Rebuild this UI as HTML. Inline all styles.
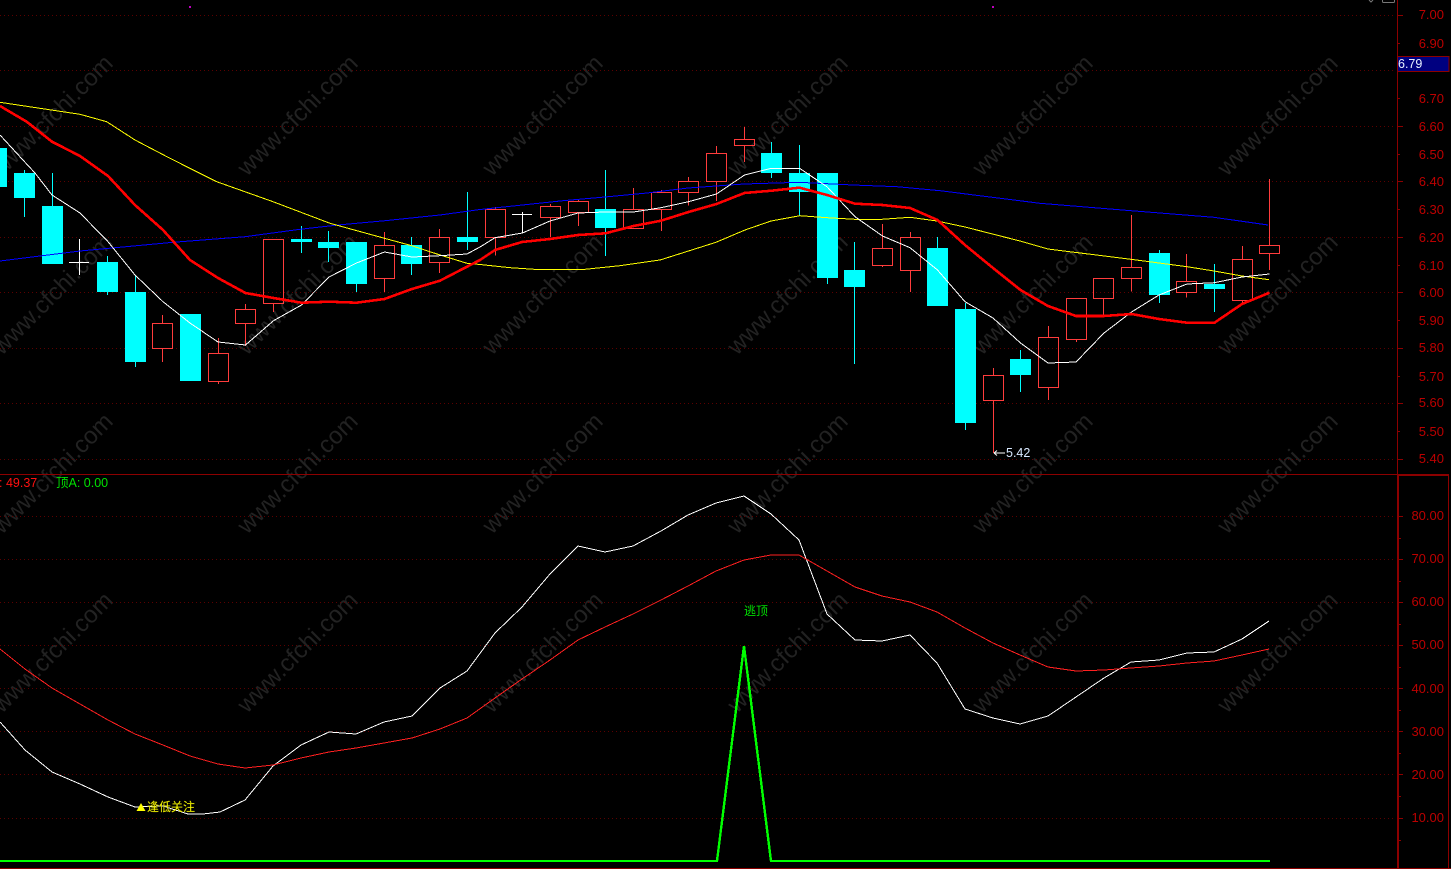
<!DOCTYPE html>
<html lang="zh">
<head>
<meta charset="utf-8">
<title>chart</title>
<style>
html,body{margin:0;padding:0;background:#000;width:1451px;height:869px;overflow:hidden}
svg{display:block}
.wm text{font:24px "Liberation Sans",sans-serif;fill:#222}
.ax text{font:13px "Liberation Sans",sans-serif;fill:#bc0000;text-anchor:end}
.cj{font-family:"Liberation Sans","WenQuanYi Zen Hei","Noto Sans CJK SC",sans-serif;font-size:12.5px}
</style>
</head>
<body>
<svg width="1451" height="869" viewBox="0 0 1451 869" xmlns="http://www.w3.org/2000/svg">
<rect width="1451" height="869" fill="#000"/>

<g class="wm">
<text transform="translate(2,177) rotate(-45)">www.cfchi.com</text>
<text transform="translate(247,177) rotate(-45)">www.cfchi.com</text>
<text transform="translate(492,177) rotate(-45)">www.cfchi.com</text>
<text transform="translate(737,177) rotate(-45)">www.cfchi.com</text>
<text transform="translate(982,177) rotate(-45)">www.cfchi.com</text>
<text transform="translate(1227,177) rotate(-45)">www.cfchi.com</text>
<text transform="translate(2,356) rotate(-45)">www.cfchi.com</text>
<text transform="translate(247,356) rotate(-45)">www.cfchi.com</text>
<text transform="translate(492,356) rotate(-45)">www.cfchi.com</text>
<text transform="translate(737,356) rotate(-45)">www.cfchi.com</text>
<text transform="translate(982,356) rotate(-45)">www.cfchi.com</text>
<text transform="translate(1227,356) rotate(-45)">www.cfchi.com</text>
<text transform="translate(2,535) rotate(-45)">www.cfchi.com</text>
<text transform="translate(247,535) rotate(-45)">www.cfchi.com</text>
<text transform="translate(492,535) rotate(-45)">www.cfchi.com</text>
<text transform="translate(737,535) rotate(-45)">www.cfchi.com</text>
<text transform="translate(982,535) rotate(-45)">www.cfchi.com</text>
<text transform="translate(1227,535) rotate(-45)">www.cfchi.com</text>
<text transform="translate(2,714) rotate(-45)">www.cfchi.com</text>
<text transform="translate(247,714) rotate(-45)">www.cfchi.com</text>
<text transform="translate(492,714) rotate(-45)">www.cfchi.com</text>
<text transform="translate(737,714) rotate(-45)">www.cfchi.com</text>
<text transform="translate(982,714) rotate(-45)">www.cfchi.com</text>
<text transform="translate(1227,714) rotate(-45)">www.cfchi.com</text>
</g>

<!-- dotted grid -->
<path shape-rendering="crispEdges" fill="none" stroke="#5c0000" stroke-width="1" stroke-dasharray="1 3"
 d="M0 15.5H1394M0 70.5H1394M0 126.5H1394M0 181.5H1394M0 237.5H1394M0 292.5H1394M0 348.5H1394M0 403.5H1394M0 459.5H1394
    M0 516.5H1394M0 559.5H1394M0 602.5H1394M0 645.5H1394M0 688.5H1394M0 731.5H1394M0 774.5H1394M0 818.5H1394"/>

<!-- cyan wicks -->
<path shape-rendering="crispEdges" fill="none" stroke="#00ffff" stroke-width="1"
 d="M24.5 170V217M52.5 173V206M107.5 256V295M135.5 275V367M301.5 226V253M328.5 231V262M356.5 284V292M411.5 237V275M467.5 192V250
    M605.5 170V256M771.5 142V178M799.5 145V216M827.5 278V284M854.5 242V364M937.5 237V248M965.5 303V430M1020.5 350V392M1159.5 250V303M1214.5 264V312"/>
<!-- cyan bodies -->
<path shape-rendering="crispEdges" fill="#00ffff"
 d="M-4 148H7V187H-4ZM14 173H35V198H14ZM42 206H63V264H42ZM97 262H118V292H97ZM125 292H146V362H125ZM180 314H201V381H180ZM291 239H312V242H291ZM318 242H339V248H318ZM346 242H367V284H346ZM401 245H422V264H401ZM457 237H478V242H457ZM595 209H616V228H595ZM761 153H782V173H761ZM789 173H810V192H789ZM817 173H838V278H817ZM844 270H865V287H844ZM927 248H948V306H927ZM955 309H976V423H955ZM1010 359H1031V375H1010ZM1149 253H1170V295H1149ZM1204 284H1225V289H1204Z"/>

<!-- red hollow candles -->
<path shape-rendering="crispEdges" fill="none" stroke="#ff3c3c" stroke-width="1"
 d="M162.5 315V323.5M162.5 348.5V362M152.5 323.5H172.5V348.5H152.5Z
    M218.5 338V353.5M218.5 381.5V384M208.5 353.5H228.5V381.5H208.5Z
    M245.5 304V309.5M245.5 323.5V346M235.5 309.5H255.5V323.5H235.5Z
    M273.5 303.5V312M263.5 239.5H283.5V303.5H263.5Z
    M384.5 232V245.5M384.5 278.5V292M374.5 245.5H394.5V278.5H374.5Z
    M439.5 229V237.5M439.5 262.5V273M429.5 237.5H449.5V262.5H429.5Z
    M495.5 207V209.5M495.5 237.5V255.5M485.5 209.5H505.5V237.5H485.5Z
    M550.5 204V206.5M550.5 217.5V237M540.5 206.5H560.5V217.5H540.5Z
    M578.5 200V201.5M578.5 212.5V226M568.5 201.5H588.5V212.5H568.5Z
    M633.5 188V209.5M623.5 209.5H643.5V228.5H623.5Z
    M661.5 190V192.5M661.5 209.5V231M651.5 192.5H671.5V209.5H651.5Z
    M688.5 177V181.5M688.5 192.5V205.5M678.5 181.5H698.5V192.5H678.5Z
    M716.5 146V153.5M716.5 181.5V201M706.5 153.5H726.5V181.5H706.5Z
    M744.5 127V139.5M744.5 145.5V162M734.5 139.5H754.5V145.5H734.5Z
    M882.5 224V248.5M882.5 265.5V267M872.5 248.5H892.5V265.5H872.5Z
    M910.5 232V237.5M910.5 270.5V292M900.5 237.5H920.5V270.5H900.5Z
    M993.5 368V375.5M993.5 400.5V453M983.5 375.5H1003.5V400.5H983.5Z
    M1048.5 326V337.5M1048.5 387.5V400M1038.5 337.5H1058.5V387.5H1038.5Z
    M1076.5 339.5V342M1066.5 298.5H1086.5V339.5H1066.5Z
    M1103.5 298.5V315.5M1093.5 278.5H1113.5V298.5H1093.5Z
    M1131.5 215V267.5M1131.5 278.5V291.5M1121.5 267.5H1141.5V278.5H1121.5Z
    M1186.5 254V281.5M1186.5 292.5V297.5M1176.5 281.5H1196.5V292.5H1176.5Z
    M1242.5 246V259.5M1242.5 300.5V303M1232.5 259.5H1252.5V300.5H1232.5Z
    M1269.5 179V245.5M1269.5 253.5V270M1259.5 245.5H1279.5V253.5H1259.5Z"/>

<!-- white doji -->
<path shape-rendering="crispEdges" fill="none" stroke="#fff" stroke-width="1"
 d="M79.5 239V275M69 262.5H89M522.5 212V233.5M512 214.5H532"/>

<!-- moving averages -->
<g shape-rendering="crispEdges" fill="none">
<polyline stroke="#0000ff" stroke-width="1" points="0,261 80,251 173,242.3 245,236.7 300,229.3 338,225 385,220.7 440,215 480,209.5 563,200.7 605,197 647,193 688,188 744,184 799,182.3 853,185 897,186.7 940,190.7 1040,203.3 1131,210.7 1214,217.3 1268,225"/>
<polyline stroke="#ffff00" stroke-width="1" points="0,102.3 80,114.3 106.7,121.7 135,140 170,158.3 216.7,181.7 273,201.7 330,223.3 384.5,238.3 411.7,245.7 440,255 467,263.3 480,264.5 510,267.7 540,269.7 585,269.3 620,265.7 660,260 716,242.3 745,230 771,221 800,215.7 827,217.7 855,219.3 882,219.3 910,217.3 937,221 965,227 1020,241 1048,249 1131,259.3 1187,266.7 1214,271 1242,276 1269,279.7"/>
<polyline stroke="#ffffff" stroke-width="1" points="0,135 24.5,161.7 35,173 52,195 80,213 108,241.7 135,275 163,301.7 190,323 218,342 245.5,345 273.5,320.7 301.5,305 329,277 356.5,263 384.5,252 412,257 440,255.7 467,254 480,247 495,237.7 522.5,233 550,221 578,213 605.5,212 633.5,212 661,207.7 688.5,201.7 716.5,194 744.5,175 771.5,168.3 799.5,168.3 827,186.7 855,216.7 882.5,236 910,247.7 937.5,270 965,301.7 993,318 1020.5,343 1048,363 1076,362 1104,333 1131.5,312 1159,295 1187,284 1214.5,282.7 1242,277 1269.5,274"/>
<polyline stroke="#ff0000" stroke-width="2.6" points="0,106 26.7,121.7 52,141.7 80,156 108,176 135,205 163,230 190,260 218,278 245.5,293 273.5,298 301.5,302.7 329,301.7 356.5,302.7 384.5,299 412,289 440,280.7 467,266.7 480,260 495,250 522,242 550,239 578,235 605.5,233.3 633.5,226 661,220.7 688.5,212 716.5,204 744.5,193 771.5,190.7 799.5,187.7 827,195 855,203.7 882.5,205 910,208 937.5,220 965,245 993,268 1020.5,290 1048,306 1076,316 1104,316 1131.5,314 1159,319 1187,322.7 1214.5,322.7 1242,304 1269.5,292.7"/>
</g>

<!-- low marker -->
<path fill="none" stroke="#fff" stroke-width="1" d="M994 453H1005M994 453l3-2.5M994 453l3 2.5"/>
<text x="1006" y="457" font-family="Liberation Sans,sans-serif" font-size="12.5" fill="#d8e8ff">5.42</text>

<!-- top markers -->
<rect x="189" y="6" width="2" height="2" fill="#c000c0"/>
<rect x="992" y="6" width="2" height="2" fill="#c000c0"/>
<path fill="none" stroke="#777" stroke-width="1" d="M1369 0l2 2 2-2M1382.5 0v1.5q0 1 1 1h10q1 0 1-1V0"/>

<!-- lower indicator -->
<g shape-rendering="crispEdges" fill="none">
<polyline stroke="#ffffff" stroke-width="1" points="0,722 25,750 52,772 80,784 108,797 135,807 163,806 188,814 203,814 220,812 245,800 273,766 301,745 329,732 356,734 384,722 412,716 440,688 467,671 495,633 522,607 550,574 578,546 605,552 633,546 661,531 688,515 716,503 744,496 771,514 799,540 827,614 855,640 882,641 910,635 937,663 965,709 993,718 1020,724 1048,716 1076,697 1104,678 1131,662 1159,660 1187,653 1214,652 1242,639 1269,621"/>
<polyline stroke="#ff2020" stroke-width="1" points="0,649 25,669 52,688 80,704 108,720 135,734 163,745 190,756 218,764 245,768 273,765 301,758 329,752 356,748 384,743 412,738 440,729 467,718 495,698 522,679 550,660 578,640 605,627 633,614 661,600 688,586 716,571 744,560 771,555 799,555 827,571 855,587 882,596 910,602 937,612 965,628 993,643 1020,655 1048,667 1076,671 1104,670 1131,668 1159,666 1187,663 1214,661 1242,655 1269,649"/>
<polyline stroke="#00ff00" stroke-width="2.4" points="0,861 717,861 744,646 771,861 1270,861"/>
</g>

<!-- indicator labels -->
<text x="-1" y="487" class="cj" fill="#ff1010">: 49.37</text>
<text x="56" y="487" class="cj" fill="#00e000">顶A: 0.00</text>
<path d="M141 803L145.500 811H136.500Z" fill="#ffff00"/>
<text x="147" y="811" class="cj" style="font-size:12px" fill="#ffff00" stroke="#a0a000" stroke-width=".2">逢低关注</text>
<text x="744" y="615" class="cj" style="font-size:12px" fill="#00e000">逃顶</text>

<!-- frame and axis -->
<path shape-rendering="crispEdges" fill="none" stroke="#8c0000" stroke-width="1"
 d="M1397.500 0V474M0 474.500H1449"/>
<path shape-rendering="crispEdges" fill="none" stroke="#8c0000" stroke-width="2"
 d="M1398 474V868M1398 475H1449"/>
<path shape-rendering="crispEdges" fill="none" stroke="#8c0000" stroke-width="1"
 d="M1448.500 474V868M0 868.500H1451"/>

<!-- ticks -->
<path shape-rendering="crispEdges" fill="none" stroke="#8c0000" stroke-width="1"
 d="M1398 15.500H1403M1398 43.500H1400M1398 70.500H1403M1398 98.500H1400M1398 126.500H1403M1398 154.500H1400M1398 181.500H1403M1398 209.500H1400M1398 237.500H1403M1398 265.500H1400M1398 292.500H1403M1398 320.500H1400M1398 348.500H1403M1398 376.500H1400M1398 403.500H1403M1398 431.500H1400M1398 459.500H1403
    M1399 516.500H1403M1399 538.500H1401M1399 559.500H1403M1399 581.500H1401M1399 602.500H1403M1399 624.500H1401M1399 645.500H1403M1399 667.500H1401M1399 688.500H1403M1399 710.500H1401M1399 731.500H1403M1399 753.500H1401M1399 774.500H1403M1399 796.500H1401M1399 818.500H1403M1399 840.500H1401"/>

<rect x="1398" y="57" width="51" height="15" fill="#000080"/>
<path shape-rendering="crispEdges" fill="none" stroke="#8c0000" stroke-width="1" d="M1398 56.500H1449V71.500H1398"/>
<text x="1398" y="68" font-family="Liberation Sans,sans-serif" font-size="12.5" fill="#e8f0ff">6.79</text>

<g class="ax">
<text x="1444" y="19">7.00</text>
<text x="1444" y="48">6.90</text>
<text x="1444" y="103">6.70</text>
<text x="1444" y="131">6.60</text>
<text x="1444" y="159">6.50</text>
<text x="1444" y="186">6.40</text>
<text x="1444" y="214">6.30</text>
<text x="1444" y="242">6.20</text>
<text x="1444" y="270">6.10</text>
<text x="1444" y="297">6.00</text>
<text x="1444" y="325">5.90</text>
<text x="1444" y="352">5.80</text>
<text x="1444" y="381">5.70</text>
<text x="1444" y="407">5.60</text>
<text x="1444" y="436">5.50</text>
<text x="1444" y="463">5.40</text>
<text x="1444" y="520">80.00</text>
<text x="1444" y="563">70.00</text>
<text x="1444" y="606">60.00</text>
<text x="1444" y="649">50.00</text>
<text x="1444" y="693">40.00</text>
<text x="1444" y="736">30.00</text>
<text x="1444" y="779">20.00</text>
<text x="1444" y="822">10.00</text>
</g>
</svg>
</body>
</html>
